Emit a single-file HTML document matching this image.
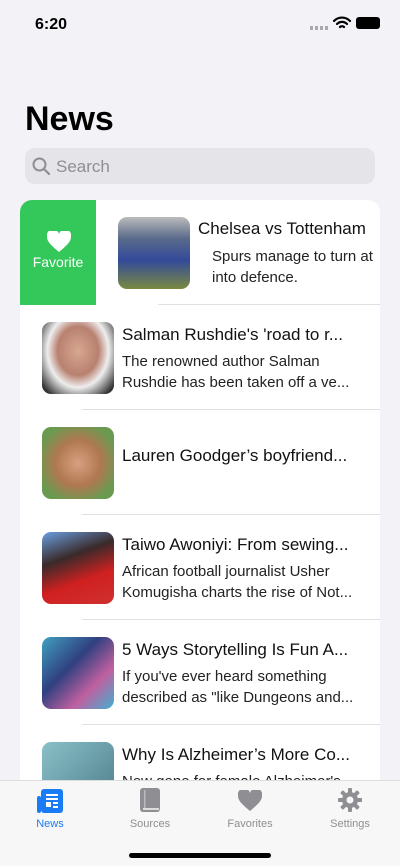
<!DOCTYPE html>
<html><head><style>
*{margin:0;padding:0;box-sizing:border-box}
body{width:400px;height:866px;background:#f2f2f7;font-family:"Liberation Sans",sans-serif;position:relative;overflow:hidden;color:#000}
.abs{position:absolute}
.card{position:absolute;left:20px;top:200px;width:360px;height:600px;background:#fff;border-radius:12px;overflow:hidden}
.row{position:absolute;left:0;width:360px;height:105px}
.img{position:absolute;width:72px;height:72px;border-radius:9px;overflow:hidden}
.t{position:absolute;font-size:17px;white-space:nowrap;color:#111}
.d{position:absolute;font-size:15px;line-height:21px;color:#222;white-space:nowrap}
.sep{position:absolute;height:1px;background:#e0e0e4;right:0}
.tab{position:absolute;top:780px;left:0;width:400px;height:86px;background:#f7f7f7;border-top:1px solid #ddd}
.tl{position:absolute;top:37px;font-size:11px;color:#8e8e93;width:100px;text-align:center}
</style></head><body>
<div class="abs" style="left:35px;top:16px;font-size:16px;font-weight:bold">6:20</div>
<div class="abs" style="left:310px;top:26px;width:18px;height:4px;background:repeating-linear-gradient(90deg,#aaa 0 3px,transparent 3px 5px)"></div>
<svg class="abs" style="left:333px;top:16px" width="18" height="14" viewBox="0 0 18 14"><path d="M1 5a11 11 0 0 1 16 0M4 8a7 7 0 0 1 10 0M7 11a3 3 0 0 1 4 0" stroke="#000" stroke-width="2.2" fill="none" stroke-linecap="round"/></svg>
<div class="abs" style="left:356px;top:17px;width:24px;height:12px;border-radius:3px;background:#000"></div>
<div class="abs" style="left:25px;top:100px;font-size:34px;font-weight:bold">News</div>
<div class="abs" style="left:25px;top:148px;width:350px;height:36px;border-radius:10px;background:#e4e4e9"></div>
<svg class="abs" style="left:32px;top:157px" width="18" height="18" viewBox="0 0 18 18"><circle cx="7.5" cy="7.5" r="6" stroke="#8e8e93" stroke-width="2" fill="none"/><path d="M12 12l5 5" stroke="#8e8e93" stroke-width="2.2" stroke-linecap="round"/></svg>
<div class="abs" style="left:56px;top:157px;font-size:17px;color:#8e8e93">Search</div>
<div class="card">
 <div class="abs" style="left:0;top:0;width:76px;height:105px;background:#34c759"></div>
 <svg class="abs" style="left:27px;top:31px" width="24" height="21" viewBox="0 0 24 21"><path d="M12 21C5 15 0 11 0 6A6 6 0 0 1 12 3A6 6 0 0 1 24 6C24 11 19 15 12 21Z" fill="#fff"/></svg>
 <div class="abs" style="left:0;top:54px;width:76px;text-align:center;color:#fff;font-size:14px">Favorite</div>
 <div class="img" style="left:98px;top:17px;background:linear-gradient(180deg,#bbb 0,#5a6a8a 30%,#334a9a 60%,#7a8a40 100%)"></div>
 <div class="t" style="left:178px;top:19px">Chelsea vs Tottenham</div>
 <div class="d" style="left:192px;top:46px">Spurs manage to turn at<br>into defence.</div>
 <div class="sep" style="left:138px;top:104px"></div>
 <div class="row" style="top:105px">
  <div class="img" style="left:22px;top:17px;background:radial-gradient(ellipse at 50% 40%,#d8a890 0,#b88070 40%,#eee 60%,#333 90%)"></div>
  <div class="t" style="left:102px;top:20px">Salman Rushdie's 'road to r...</div>
  <div class="d" style="left:102px;top:46px">The renowned author Salman<br>Rushdie has been taken off a ve...</div>
  <div class="sep" style="left:62px;top:104px"></div>
 </div>
 <div class="row" style="top:210px">
  <div class="img" style="left:22px;top:17px;background:radial-gradient(ellipse at 50% 50%,#d8a080 0,#b07850 45%,#6a9a50 80%)"></div>
  <div class="t" style="left:102px;top:36px">Lauren Goodger’s boyfriend...</div>
  <div class="sep" style="left:62px;top:104px"></div>
 </div>
 <div class="row" style="top:315px">
  <div class="img" style="left:22px;top:17px;background:linear-gradient(160deg,#6aa0e0 0,#3a2a2a 35%,#d02020 65%,#d03030 100%)"></div>
  <div class="t" style="left:102px;top:20px">Taiwo Awoniyi: From sewing...</div>
  <div class="d" style="left:102px;top:46px">African football journalist Usher<br>Komugisha charts the rise of Not...</div>
  <div class="sep" style="left:62px;top:104px"></div>
 </div>
 <div class="row" style="top:420px">
  <div class="img" style="left:22px;top:17px;background:linear-gradient(135deg,#40a0c0 0,#304080 40%,#c060a0 70%,#40b0d0 100%)"></div>
  <div class="t" style="left:102px;top:20px">5 Ways Storytelling Is Fun A...</div>
  <div class="d" style="left:102px;top:46px">If you've ever heard something<br>described as "like Dungeons and...</div>
  <div class="sep" style="left:62px;top:104px"></div>
 </div>
 <div class="row" style="top:525px">
  <div class="img" style="left:22px;top:17px;background:linear-gradient(135deg,#8ac0c8,#4a7a88)"></div>
  <div class="t" style="left:102px;top:20px">Why Is Alzheimer’s More Co...</div>
  <div class="d" style="left:102px;top:46px">New gene for female Alzheimer's</div>
 </div>
</div>
<div class="tab">
 <svg class="abs" style="left:36px;top:7px" width="28" height="26" viewBox="0 0 28 26"><rect x="5" y="1" width="22" height="24" rx="3" fill="#1a7cf5"/><rect x="1" y="8" width="4" height="17" rx="2" fill="#1a7cf5"/><rect x="10" y="6" width="12" height="2" fill="#fff"/><rect x="10" y="10" width="12" height="2" fill="#fff"/><rect x="10" y="14" width="5" height="5" fill="#fff"/><rect x="17" y="14" width="5" height="2" fill="#fff"/><rect x="17" y="18" width="5" height="2" fill="#fff"/></svg>
 <div class="tl" style="left:0;color:#1a7cf5">News</div>
 <svg class="abs" style="left:139px;top:6px" width="22" height="26" viewBox="0 0 22 26"><rect x="1" y="1" width="20" height="24" rx="3" fill="#8e8e93"/><rect x="5" y="3" width="1.5" height="18" fill="#bbb"/><rect x="4" y="21" width="16" height="2" fill="#ddd"/></svg>
 <div class="tl" style="left:100px">Sources</div>
 <svg class="abs" style="left:238px;top:9px" width="24" height="21" viewBox="0 0 24 21"><path d="M12 21C5 15 0 11 0 6A6 6 0 0 1 12 3A6 6 0 0 1 24 6C24 11 19 15 12 21Z" fill="#8e8e93"/></svg>
 <div class="tl" style="left:200px">Favorites</div>
 <svg class="abs" style="left:338px;top:7px" width="24" height="24" viewBox="0 0 24 24"><g fill="#8e8e93"><circle cx="12" cy="12" r="8"/><rect x="10" y="0" width="4" height="24" rx="1"/><rect x="10" y="0" width="4" height="24" rx="1" transform="rotate(45 12 12)"/><rect x="10" y="0" width="4" height="24" rx="1" transform="rotate(90 12 12)"/><rect x="10" y="0" width="4" height="24" rx="1" transform="rotate(135 12 12)"/></g><circle cx="12" cy="12" r="3.5" fill="#f7f7f7"/></svg>
 <div class="tl" style="left:300px">Settings</div>
 <div class="abs" style="left:129px;top:72px;width:142px;height:5px;border-radius:3px;background:#000"></div>
</div>
</body></html>
